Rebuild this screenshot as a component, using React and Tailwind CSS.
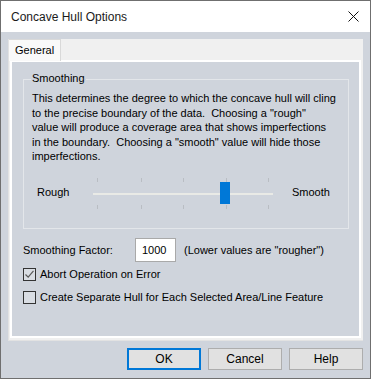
import React from 'react';

function CheckBox({ checked, label }) {
  return (
    <div className="flex items-center h-[16px]">
      <div className="w-[13px] h-[13px] border border-[#333333] bg-[#d9dde3] flex items-center justify-center">
        {checked && (
          <svg width="11" height="11" viewBox="0 0 11 11">
            <path d="M1.5 5.5 L4.2 8.2 L9.5 1.8" fill="none" stroke="#5a5a5a" strokeWidth="1.2" />
          </svg>
        )}
      </div>
      <span className="ml-[4px]">{label}</span>
    </div>
  );
}

function Slider() {
  const ticks = [4, 48, 90, 133, 175];
  return (
    <div className="relative w-[180px] h-[34px]">
      {ticks.map((t, i) => (
        <div key={i} className="absolute top-[2px] w-px h-[4px] bg-[#b9bdc3]" style={{ left: t }} />
      ))}
      <div className="absolute left-0 right-0 top-[17px] h-[2px] bg-[#e9eae6]" />
      {ticks.map((t, i) => (
        <div key={'b' + i} className="absolute top-[29px] w-px h-[4px] bg-[#b9bdc3]" style={{ left: t }} />
      ))}
      <div className="absolute left-[127px] top-[6px] w-[10px] h-[22px] bg-[#0078d7]" />
    </div>
  );
}

export default function App() {
  return (
    <div
      className="w-[371px] h-[379px] border border-[#6f6f6f] flex flex-col bg-[#cfd4dc] text-[11px] text-black"
      style={{ fontFamily: '"Liberation Sans", Arial, sans-serif' }}
    >
      {/* Title bar */}
      <div className="h-[31px] bg-white flex items-center justify-between pl-[10px] pr-[10px]">
        <span className="text-[12px] text-[#1a1a1a]">Concave Hull Options</span>
        <svg width="11" height="11" viewBox="0 0 11 11" className="mr-[1px]">
          <path d="M0.5 0.5 L10.5 10.5 M10.5 0.5 L0.5 10.5" stroke="#111" strokeWidth="1" />
        </svg>
      </div>

      {/* Tab frame */}
      <div className="ml-[7px] mt-[7px] w-[355px] h-[302px] flex flex-col bg-[#f0f0f0] border-l border-b border-[#e2e2e2]">
        <div className="flex h-[21px]">
          <div className="w-[52px] h-[22px] bg-[#f9f9f9] border-t border-r border-[#d9d9d9] flex items-center pl-[6px] z-10">
            General
          </div>
          <div className="flex-1" />
        </div>
        <div className="flex-1 ml-[1px] mr-[2px] mb-[2px] border-2 border-white bg-[#cfd4dc] flex flex-col">
          {/* Group box */}
          <div className="relative ml-[11px] mt-[17px] w-[326px] h-[150px] border border-[#e3e6ea] flex flex-col">
            <span className="absolute left-[7px] top-[-10px] px-[1px] bg-[#cfd4dc]">Smoothing</span>
            <p className="mt-[11px] ml-[8px] leading-[14.5px] whitespace-nowrap">
              This determines the degree to which the concave hull will cling<br />
              to the precise boundary of the data.&nbsp; Choosing a "rough"<br />
              value will produce a coverage area that shows imperfections<br />
              in the boundary.&nbsp; Choosing a "smooth" value will hide those<br />
              imperfections.
            </p>
            <div className="flex items-center mt-[12px]">
              <span className="ml-[13px] w-[56px]">Rough</span>
              <Slider />
              <span className="ml-[19px]">Smooth</span>
            </div>
          </div>

          {/* Smoothing factor */}
          <div className="flex items-center ml-[11px] mt-[9px]">
            <span className="w-[112px]">Smoothing Factor:</span>
            <div className="w-[41px] h-[24px] bg-white border border-[#a9a9a9] flex items-center pl-[6px]">1000</div>
            <span className="ml-[8px]">(Lower values are "rougher")</span>
          </div>

          <div className="ml-[11px] mt-[4px] flex flex-col gap-[7px]">
            <CheckBox checked label="Abort Operation on Error" />
            <CheckBox label="Create Separate Hull for Each Selected Area/Line Feature" />
          </div>
        </div>
      </div>

      {/* Buttons */}
      <div className="flex justify-end gap-[7px] pr-[7px] mt-[7px]">
        <button className="w-[74px] h-[22px] bg-[#e1e1e1] border-2 border-[#0078d7] text-[12px] flex items-center justify-center">OK</button>
        <button className="w-[74px] h-[22px] bg-[#e1e1e1] border border-[#adadad] text-[12px] flex items-center justify-center">Cancel</button>
        <button className="w-[74px] h-[22px] bg-[#e1e1e1] border border-[#adadad] text-[12px] flex items-center justify-center">Help</button>
      </div>
    </div>
  );
}
